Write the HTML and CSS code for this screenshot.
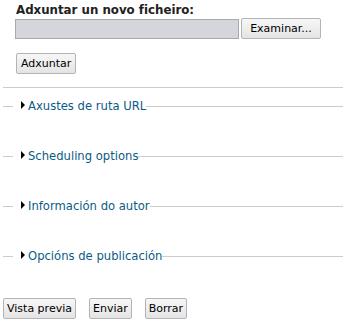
FILE: index.html
```html
<!DOCTYPE html>
<html lang="gl">
<head>
    <meta charset="UTF-8">
    <title>Adxuntar ficheiro</title>
    <link rel="stylesheet" href="styles.css">
</head>
<body>
    <div class="attach">
        <label class="attach-label">Adxuntar un novo ficheiro:</label>
        <div class="file-row">
            <span class="file-box"></span>
            <button class="btn browse">Examinar...</button>
        </div>
        <button class="btn attach-btn">Adxuntar</button>
    </div>
    <div class="rule"></div>
    <fieldset class="collapsed">
        <legend><span class="arrow"></span><a href="#">Axustes de ruta URL</a></legend>
    </fieldset>
    <fieldset class="collapsed">
        <legend><span class="arrow"></span><a href="#">Scheduling options</a></legend>
    </fieldset>
    <fieldset class="collapsed">
        <legend><span class="arrow"></span><a href="#">Información do autor</a></legend>
    </fieldset>
    <fieldset class="collapsed">
        <legend><span class="arrow"></span><a href="#">Opcións de publicación</a></legend>
    </fieldset>
    <div class="form-actions">
        <button class="btn">Vista previa</button>
        <button class="btn">Enviar</button>
        <button class="btn">Borrar</button>
    </div>
</body>
</html>
```
FILE: styles.css
```css
body {
    font-family: 'DejaVu Sans', Verdana, sans-serif;
    font-size: 12px;
    background-color: #ffffff;
    color: #222;
    margin: 0;
    padding: 0;
}
.attach {
    padding: 3px 0 0 15px;
}
.attach-label {
    display: block;
    margin-left: 1px;
    font-weight: bold;
    font-size: 11.8px;
    line-height: 14px;
    color: #222;
}
.file-row {
    display: flex;
    align-items: flex-start;
    margin-top: 1px;
}
.file-box {
    display: block;
    width: 222px;
    height: 18px;
    margin-top: 1px;
    background-color: #d5d5dc;
    border: 1px solid #a8a8ae;
}
.btn {
    font-family: 'DejaVu Sans', Tahoma, sans-serif;
    font-size: 11px;
    color: #000;
    height: 21px;
    padding: 0 3px;
    background: linear-gradient(#f7f7f7, #e4e4e4);
    border: 1px solid #b4b4b4;
    border-radius: 2px;
    cursor: pointer;
}
.browse {
    width: 80px;
    margin-left: 2px;
}
.attach-btn {
    margin: 14px 0 0 1px;
    padding: 0 4px;
}
.rule {
    margin: 13px 0 0 3px;
    border-top: 1px solid #cccccc;
}
fieldset.collapsed {
    margin: 11px 0 36px 3px;
    padding: 0 0 0 10px;
    border: 0;
    border-top: 1px solid #cccccc;
    min-width: 0;
}
fieldset.collapsed:last-of-type {
    margin-bottom: 35px;
}
fieldset.collapsed legend {
    padding: 0 0 0 8px;
    font-size: 11.6px;
    line-height: 14px;
}
fieldset.collapsed legend a {
    color: #0b5b86;
    text-decoration: none;
}
.arrow {
    display: inline-block;
    width: 0;
    height: 0;
    margin-right: 3px;
    border-top: 4px solid transparent;
    border-bottom: 4px solid transparent;
    border-left: 4px solid #000;
    vertical-align: 1px;
}
.form-actions {
    display: flex;
    gap: 13px;
    margin: 0 0 0 3px;
}
```
